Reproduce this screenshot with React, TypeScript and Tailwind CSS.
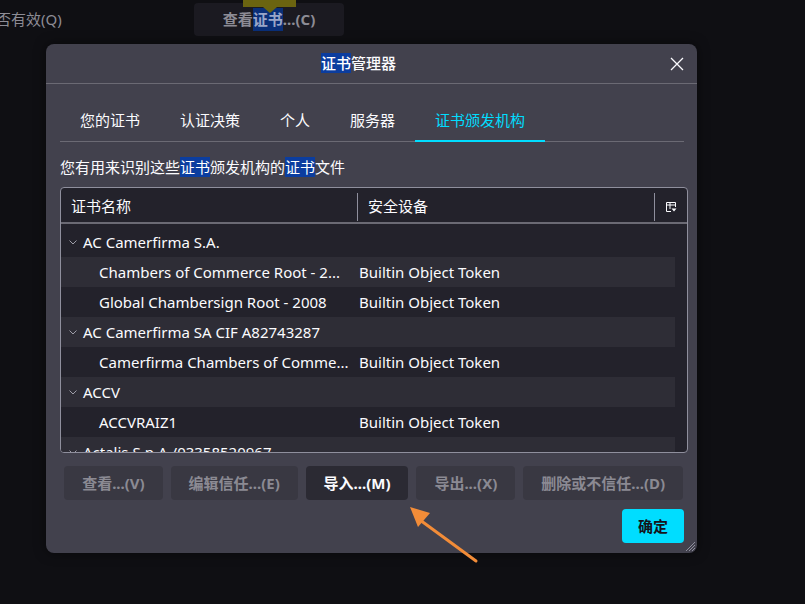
import React from "react";

type Row = { group?: boolean; name: string; device?: string };

const rows: Row[] = [
  { group: true, name: "AC Camerfirma S.A." },
  { name: "Chambers of Commerce Root - 2...", device: "Builtin Object Token" },
  { name: "Global Chambersign Root - 2008", device: "Builtin Object Token" },
  { group: true, name: "AC Camerfirma SA CIF A82743287" },
  { name: "Camerfirma Chambers of Comme...", device: "Builtin Object Token" },
  { group: true, name: "ACCV" },
  { name: "ACCVRAIZ1", device: "Builtin Object Token" },
  { group: true, name: "Actalis S.p.A./03358520967" },
];

const tabs = ["您的证书", "认证决策", "个人", "服务器", "证书颁发机构"];

function Sel({ children }: { children: React.ReactNode }) {
  return <span className="bg-[#0b3d9f] text-white">{children}</span>;
}

function Chevron() {
  return (
    <svg width="10" height="10" viewBox="0 0 10 10" className="shrink-0">
      <path d="M1.5 3.5 L5 7 L8.5 3.5" fill="none" stroke="#9e9ea8" strokeWidth="1" />
    </svg>
  );
}

function ColumnPicker() {
  return (
    <svg width="12" height="12" viewBox="0 0 12 12">
      <path d="M1.5 1.5 H10.5 V6 M1.5 1.5 V10.5 H6 M1.5 4 H10.5 M5 1.5 V8" fill="none" stroke="#fbfbfe" strokeWidth="1" />
      <path d="M6.5 7.5 H11.5 L9 10.5 Z" fill="#fbfbfe" />
    </svg>
  );
}

function Btn({ label, enabled }: { label: string; enabled?: boolean }) {
  return (
    <button
      type="button"
      className={`h-[34px] w-full whitespace-nowrap rounded-[4px] text-[15px] font-bold ${
        enabled ? "bg-[#2b2a33] text-[#fbfbfe]" : "bg-[#393842] text-[#8b8a93]"
      }`}
    >
      {label}
    </button>
  );
}

export default function App() {
  return (
    <div className="relative h-[604px] w-[805px] overflow-hidden bg-[#0f0f13] font-[Noto_Sans,Noto_Sans_CJK_SC,sans-serif] text-[#fbfbfe]">
      {/* page behind the dialog */}
      <div className="flex h-[44px] items-start">
        <div className="mt-[8px] w-[198px] -ml-[4px] text-[15px] text-[#8d8c95]">否有效(Q)</div>
        <div className="mt-[3px] flex h-[33px] w-[150px] items-center justify-center rounded-[4px] bg-[#1b1a21] text-[15px] font-bold text-[#8d8c95]">
          查看<span className="bg-[#0a2f78] text-[#9aa6c8]">证书</span>...(C)
        </div>
      </div>

      {/* yellow tooltip remnant */}
      <div className="absolute left-[243px] top-0 h-[7px] w-[53px] bg-[#6b6410]" />
      <div className="absolute left-[263px] top-[7px] h-0 w-0 border-x-[7px] border-t-[6px] border-x-transparent border-t-[#6b6410]" />

      {/* dialog */}
      <div className="relative ml-[46px] flex h-[509px] w-[651px] flex-col rounded-[8px] bg-[#42414d] shadow-[0_0_12px_rgba(0,0,0,0.5)]">
        <div className="relative flex h-[40px] shrink-0 items-center justify-center border-b border-[#6b6a74] pr-[26px] text-[15px] font-medium">
          <span>
            <Sel>证书</Sel>管理器
          </span>
          <svg className="absolute right-[13px] top-[13px]" width="14" height="14" viewBox="0 0 14 14">
            <path d="M1 1 L13 13 M13 1 L1 13" stroke="#fbfbfe" strokeWidth="1.3" />
          </svg>
        </div>

        <div className="flex flex-1 flex-col px-[14px]">
          <div className="mt-[13px] flex h-[45px] w-[624px] border-b border-[#6b6a74]">
            {tabs.map((t, i) => (
              <div
                key={t}
                className={`-mb-px flex items-center border-b-2 px-5 pt-[3px] text-[15px] ${
                  i === 4 ? "border-[#00ddff] text-[#00ddff]" : "border-transparent text-[#fbfbfe]"
                }`}
              >
                {t}
              </div>
            ))}
          </div>

          <div className="mt-[14px] text-[15px] leading-[22px]">
            您有用来识别这些<Sel>证书</Sel>颁发机构的<Sel>证书</Sel>文件
          </div>

          <div className="mt-[9px] flex h-[266px] w-[628px] flex-col overflow-hidden rounded-[4px] border border-[#8f8f9d] bg-[#23222b]">
            <div className="flex h-[36px] shrink-0 items-center border-b-2 border-[#6b6a74] pt-[3px] text-[15px]">
              <div className="flex w-[296px] items-center pl-[10px]">证书名称</div>
              <div className="h-[28px] w-px bg-[#8f8f9d]" />
              <div className="flex w-[296px] items-center pl-[10px]">安全设备</div>
              <div className="h-[28px] w-px bg-[#8f8f9d]" />
              <div className="flex flex-1 items-center justify-center">
                <ColumnPicker />
              </div>
            </div>
            <div className="w-[614px] pt-[3px]">
              {rows.map((r, i) => (
                <div
                  key={r.name}
                  className={`flex h-[30px] items-center text-[15px] ${i % 2 === 0 ? "bg-[#23222b]" : "bg-[#2e2d36]"}`}
                >
                  {r.group ? (
                    <div className="flex w-[297px] items-center gap-[5px] pl-[7px] whitespace-nowrap">
                      <Chevron />
                      <span>{r.name}</span>
                    </div>
                  ) : (
                    <div className="w-[297px] truncate pl-[38px]">{r.name}</div>
                  )}
                  <div className="pl-[1px] whitespace-nowrap">{r.device}</div>
                </div>
              ))}
            </div>
          </div>

          <div className="mt-[13px] flex gap-2 pl-[4px]">
            <div className="w-[99px]"><Btn label="查看...(V)" /></div>
            <div className="w-[127px]"><Btn label="编辑信任...(E)" /></div>
            <div className="w-[103px]"><Btn label="导入...(M)" enabled /></div>
            <div className="w-[99px]"><Btn label="导出...(X)" /></div>
            <div className="w-[160px]"><Btn label="删除或不信任...(D)" /></div>
          </div>

          <div className="mt-[9px] flex justify-end">
            <button
              type="button"
              className="mr-[-1px] h-[34px] w-[62px] rounded-[4px] bg-[#00ddff] text-[15px] font-bold text-[#15141a]"
            >
              确定
            </button>
          </div>
        </div>

        <svg className="absolute bottom-[1px] right-[1px]" width="12" height="12" viewBox="0 0 12 12">
          <path d="M11 2 L2 11 M11 5 L5 11 M11 8 L8 11" stroke="#8f8f9d" strokeWidth="1" />
        </svg>
      </div>

      {/* orange arrow */}
      <svg className="absolute left-[400px] top-[500px]" width="90" height="70" viewBox="0 0 90 70">
        <path d="M76 61 L20 20" stroke="#f28c38" strokeWidth="3" strokeLinecap="round" />
        <path d="M10 7 L30 13 L18 27 Z" fill="#f28c38" />
      </svg>
    </div>
  );
}
